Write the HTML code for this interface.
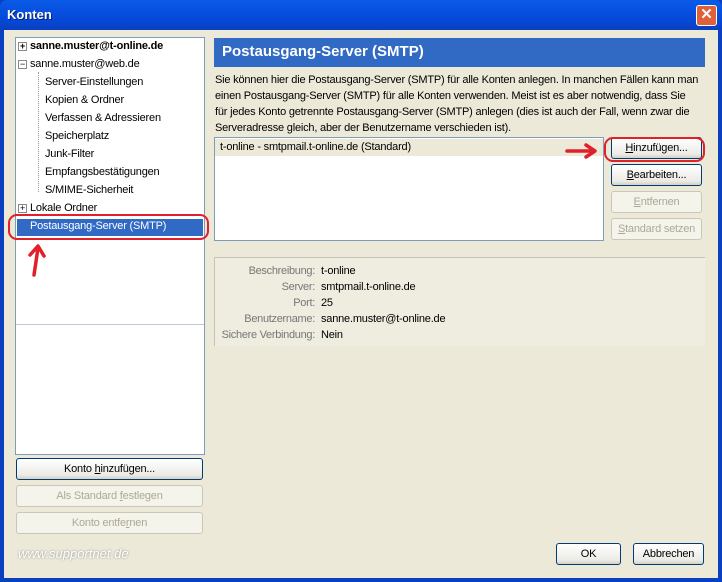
<!DOCTYPE html>
<html><head><meta charset="utf-8"><style>
*{margin:0;padding:0;box-sizing:border-box}
body{width:722px;height:582px;overflow:hidden;font-family:Tahoma,"Liberation Sans",sans-serif;font-size:11px;background:#0a3fbf}
.win{position:absolute;left:0;top:0;width:722px;height:582px;background:linear-gradient(#0a5ae8,#0548d8 20px,#0a3fbf 30px);border-radius:7px 7px 0 0}
.title{position:absolute;left:7px;top:7px;color:#fff;font-weight:bold;font-size:13px;text-shadow:1px 1px #0a1f6f}
.close{position:absolute;left:696px;top:5px;width:21px;height:21px;background:#e0603a;border:1px solid #fff;border-radius:3px;color:#fff;font-weight:bold;font-size:15px;text-align:center;line-height:18px}
.body{position:absolute;left:4px;top:30px;width:714px;height:548px;background:#ece9d8}
.a{position:absolute}
.tree{left:15px;top:37px;width:190px;height:418px;background:#fff;border:1px solid #7f9db9}
.ti{position:absolute;white-space:nowrap;color:#000;letter-spacing:-0.2px}
.pm{display:inline-block;width:9px;height:9px;border:1px solid #888;font-size:9px;line-height:7px;text-align:center;margin-right:3px;vertical-align:0}
.btn{position:absolute;border:1px solid #003c74;border-radius:3px;background:linear-gradient(#fff,#ecebe6 80%,#d6d0c5);text-align:center;line-height:20px;height:22px;color:#000;letter-spacing:-0.2px}
.dis{border-color:#c9c7ba;color:#aca899;background:#f5f4ea}
.red{position:absolute;border:2px solid #e0202a;border-radius:9px}
</style></head><body>
<div class="win">
<div class="title">Konten</div>
<div class="close">✕</div>
<div class="body"></div>
<div class="a tree">
<div class="ti" style="left:2px;top:2px;font-weight:bold"><span class="pm">+</span>sanne.muster@t-online.de</div>
<div class="ti" style="left:2px;top:20px"><span class="pm">−</span>sanne.muster@web.de</div>
<div class="a" style="left:22px;top:34px;height:120px;border-left:1px dotted #999"></div>
<div class="ti" style="left:29px;top:38px">Server-Einstellungen</div>
<div class="ti" style="left:29px;top:56px">Kopien &amp; Ordner</div>
<div class="ti" style="left:29px;top:74px">Verfassen &amp; Adressieren</div>
<div class="ti" style="left:29px;top:92px">Speicherplatz</div>
<div class="ti" style="left:29px;top:110px">Junk-Filter</div>
<div class="ti" style="left:29px;top:128px">Empfangsbestätigungen</div>
<div class="ti" style="left:29px;top:146px">S/MIME-Sicherheit</div>
<div class="ti" style="left:2px;top:164px"><span class="pm">+</span>Lokale Ordner</div>
<div class="a" style="left:1px;top:181px;width:186px;height:17px;background:#316ac5"></div>
<div class="ti" style="left:14px;top:182px;color:#fff">Postausgang-Server (SMTP)</div>
<div class="a" style="left:0;top:286px;width:188px;border-top:1px solid #c0c8d8"></div>
</div>
<div class="red" style="left:8px;top:214px;width:201px;height:26px"></div>
<svg class="a" style="left:26px;top:242px" width="22" height="36"><path d="M8 33 L12 6 M4 13 L12 4 L18 14" stroke="#e0202a" stroke-width="3.5" fill="none" stroke-linecap="round" stroke-linejoin="round"/></svg>
<div class="a" style="left:214px;top:38px;width:491px;height:29px;background:#316ac5;color:#fff;font-size:15px;font-weight:bold;padding:5px 8px">Postausgang-Server (SMTP)</div>
<div class="a" style="left:215px;top:72px;width:510px;white-space:nowrap;line-height:16px;color:#000;font-size:11px;letter-spacing:-0.2px">Sie können hier die Postausgang-Server (SMTP) für alle Konten anlegen. In manchen Fällen kann man<br>einen Postausgang-Server (SMTP) für alle Konten verwenden. Meist ist es aber notwendig, dass Sie<br>für jedes Konto getrennte Postausgang-Server (SMTP) anlegen (dies ist auch der Fall, wenn zwar die<br>Serveradresse gleich, aber der Benutzername verschieden ist).</div>
<div class="a" style="left:214px;top:137px;width:390px;height:104px;background:#fff;border:1px solid #7f9db9">
<div class="a" style="left:0;top:1px;width:388px;height:17px;background:#ece9d8;padding:2px 5px;letter-spacing:-0.2px">t-online - smtpmail.t-online.de (Standard)</div></div>
<svg class="a" style="left:564px;top:142px" width="36" height="18"><path d="M3 9 H30 M22 3 L31 9 L22 15" stroke="#e0202a" stroke-width="3.5" fill="none" stroke-linecap="round" stroke-linejoin="round"/></svg>
<div class="btn" style="left:611px;top:137px;width:91px"><u>H</u>inzufügen...</div>
<div class="red" style="left:604px;top:137px;width:101px;height:25px"></div>
<div class="btn" style="left:611px;top:164px;width:91px"><u>B</u>earbeiten...</div>
<div class="btn dis" style="left:611px;top:191px;width:91px"><u>E</u>ntfernen</div>
<div class="btn dis" style="left:611px;top:218px;width:91px"><u>S</u>tandard setzen</div>
<div class="a" style="left:214px;top:257px;width:491px;height:89px;border-top:1px solid #c8c4b4;border-left:1px solid #c8c4b4;background:#efece0"></div>
<div class="a" style="left:210px;top:263px;width:105px;text-align:right;color:#777;line-height:16px;letter-spacing:-0.3px">Beschreibung:<br>Server:<br>Port:<br>Benutzername:<br>Sichere Verbindung:</div>
<div class="a" style="left:321px;top:263px;line-height:16px;color:#000;letter-spacing:-0.2px">t-online<br>smtpmail.t-online.de<br>25<br>sanne.muster@t-online.de<br>Nein</div>
<div class="btn" style="left:16px;top:458px;width:187px">Konto <u>h</u>inzufügen...</div>
<div class="btn dis" style="left:16px;top:485px;width:187px">Als Standard <u>f</u>estlegen</div>
<div class="btn dis" style="left:16px;top:512px;width:187px">Konto entfe<u>r</u>nen</div>
<div class="a" style="left:18px;top:546px;color:#fff;font-style:italic;font-size:13px;text-shadow:0 0 2px #888">www.supportnet.de</div>
<div class="btn" style="left:556px;top:543px;width:65px">OK</div>
<div class="btn" style="left:633px;top:543px;width:71px">Abbrechen</div>
</div>
</body></html>
